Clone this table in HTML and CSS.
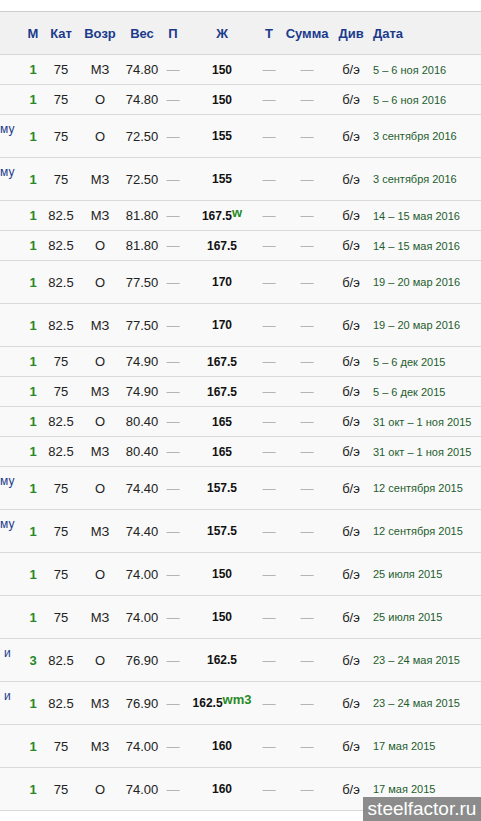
FILE: index.html
```html
<!DOCTYPE html>
<html lang="ru">
<head>
<meta charset="utf-8">
<title>Результаты</title>
<link rel="stylesheet" href="styles.css">
</head>
<body>
<div class="page">
<table class="res">
<colgroup>
<col class="w0"><col class="w1"><col class="w2"><col class="w3"><col class="w4"><col class="w5"><col class="w6"><col class="w7"><col class="w8"><col class="w9"><col class="w10">
</colgroup>
<thead>
<tr><th></th><th>М</th><th>Кат</th><th>Возр</th><th>Вес</th><th>П</th><th>Ж</th><th>Т</th><th>Сумма</th><th>Див</th><th class="dt">Дата</th></tr>
</thead>
<tbody>
<tr class="s"><td class="nm"></td><td class="pl">1</td><td>75</td><td>МЗ</td><td>74.80</td><td class="ds">—</td><td class="z">150</td><td class="ds">—</td><td class="ds">—</td><td>б/э</td><td class="dt">5 – 6 ноя 2016</td></tr>
<tr class="s"><td class="nm"></td><td class="pl">1</td><td>75</td><td>О</td><td>74.80</td><td class="ds">—</td><td class="z">150</td><td class="ds">—</td><td class="ds">—</td><td>б/э</td><td class="dt">5 – 6 ноя 2016</td></tr>
<tr class="t"><td class="nm">му<br>&nbsp;</td><td class="pl">1</td><td>75</td><td>О</td><td>72.50</td><td class="ds">—</td><td class="z">155</td><td class="ds">—</td><td class="ds">—</td><td>б/э</td><td class="dt">3 сентября 2016</td></tr>
<tr class="t"><td class="nm">му<br>&nbsp;</td><td class="pl">1</td><td>75</td><td>МЗ</td><td>72.50</td><td class="ds">—</td><td class="z">155</td><td class="ds">—</td><td class="ds">—</td><td>б/э</td><td class="dt">3 сентября 2016</td></tr>
<tr class="s"><td class="nm"></td><td class="pl">1</td><td>82.5</td><td>МЗ</td><td>81.80</td><td class="ds">—</td><td class="z">167.5<span class="rec">w</span></td><td class="ds">—</td><td class="ds">—</td><td>б/э</td><td class="dt">14 – 15 мая 2016</td></tr>
<tr class="s"><td class="nm"></td><td class="pl">1</td><td>82.5</td><td>О</td><td>81.80</td><td class="ds">—</td><td class="z">167.5</td><td class="ds">—</td><td class="ds">—</td><td>б/э</td><td class="dt">14 – 15 мая 2016</td></tr>
<tr class="t"><td class="nm"></td><td class="pl">1</td><td>82.5</td><td>О</td><td>77.50</td><td class="ds">—</td><td class="z">170</td><td class="ds">—</td><td class="ds">—</td><td>б/э</td><td class="dt">19 – 20 мар 2016</td></tr>
<tr class="t"><td class="nm"></td><td class="pl">1</td><td>82.5</td><td>МЗ</td><td>77.50</td><td class="ds">—</td><td class="z">170</td><td class="ds">—</td><td class="ds">—</td><td>б/э</td><td class="dt">19 – 20 мар 2016</td></tr>
<tr class="s"><td class="nm"></td><td class="pl">1</td><td>75</td><td>О</td><td>74.90</td><td class="ds">—</td><td class="z">167.5</td><td class="ds">—</td><td class="ds">—</td><td>б/э</td><td class="dt">5 – 6 дек 2015</td></tr>
<tr class="s"><td class="nm"></td><td class="pl">1</td><td>75</td><td>МЗ</td><td>74.90</td><td class="ds">—</td><td class="z">167.5</td><td class="ds">—</td><td class="ds">—</td><td>б/э</td><td class="dt">5 – 6 дек 2015</td></tr>
<tr class="s"><td class="nm"></td><td class="pl">1</td><td>82.5</td><td>О</td><td>80.40</td><td class="ds">—</td><td class="z">165</td><td class="ds">—</td><td class="ds">—</td><td>б/э</td><td class="dt">31 окт – 1 ноя 2015</td></tr>
<tr class="s"><td class="nm"></td><td class="pl">1</td><td>82.5</td><td>МЗ</td><td>80.40</td><td class="ds">—</td><td class="z">165</td><td class="ds">—</td><td class="ds">—</td><td>б/э</td><td class="dt">31 окт – 1 ноя 2015</td></tr>
<tr class="t"><td class="nm">му<br>&nbsp;</td><td class="pl">1</td><td>75</td><td>О</td><td>74.40</td><td class="ds">—</td><td class="z">157.5</td><td class="ds">—</td><td class="ds">—</td><td>б/э</td><td class="dt">12 сентября 2015</td></tr>
<tr class="t"><td class="nm">му<br>&nbsp;</td><td class="pl">1</td><td>75</td><td>МЗ</td><td>74.40</td><td class="ds">—</td><td class="z">157.5</td><td class="ds">—</td><td class="ds">—</td><td>б/э</td><td class="dt">12 сентября 2015</td></tr>
<tr class="t"><td class="nm"></td><td class="pl">1</td><td>75</td><td>О</td><td>74.00</td><td class="ds">—</td><td class="z">150</td><td class="ds">—</td><td class="ds">—</td><td>б/э</td><td class="dt">25 июля 2015</td></tr>
<tr class="t"><td class="nm"></td><td class="pl">1</td><td>75</td><td>МЗ</td><td>74.00</td><td class="ds">—</td><td class="z">150</td><td class="ds">—</td><td class="ds">—</td><td>б/э</td><td class="dt">25 июля 2015</td></tr>
<tr class="t"><td class="nm nm-i">и<br>&nbsp;</td><td class="pl">3</td><td>82.5</td><td>О</td><td>76.90</td><td class="ds">—</td><td class="z">162.5</td><td class="ds">—</td><td class="ds">—</td><td>б/э</td><td class="dt">23 – 24 мая 2015</td></tr>
<tr class="t"><td class="nm nm-i">и<br>&nbsp;</td><td class="pl">1</td><td>82.5</td><td>МЗ</td><td>76.90</td><td class="ds">—</td><td class="z">162.5<span class="rec">wm3</span></td><td class="ds">—</td><td class="ds">—</td><td>б/э</td><td class="dt">23 – 24 мая 2015</td></tr>
<tr class="t"><td class="nm"></td><td class="pl">1</td><td>75</td><td>МЗ</td><td>74.00</td><td class="ds">—</td><td class="z">160</td><td class="ds">—</td><td class="ds">—</td><td>б/э</td><td class="dt">17 мая 2015</td></tr>
<tr class="t"><td class="nm"></td><td class="pl">1</td><td>75</td><td>О</td><td>74.00</td><td class="ds">—</td><td class="z">160</td><td class="ds">—</td><td class="ds">—</td><td>б/э</td><td class="dt">17 мая 2015</td></tr>
</tbody>
</table>
<div class="wm">steelfactor.ru</div>
</div>
</body>
</html>
```

FILE: styles.css
```css
html, body {
  margin: 0;
  padding: 0;
  background: #ffffff;
}
body {
  width: 481px;
  height: 821px;
  overflow: hidden;
  font-family: "Liberation Sans", Arial, sans-serif;
}
.page {
  position: relative;
  width: 481px;
  height: 821px;
  padding-top: 11px;
  box-sizing: border-box;
}
.res {
  width: 481px;
  border-collapse: collapse;
  table-layout: fixed;
  font-size: 13px;
  color: #222222;
  background: #f9f9f9;
}
.w0 { width: 22px; }
.w1 { width: 22px; }
.w2 { width: 34px; }
.w3 { width: 44px; }
.w4 { width: 40px; }
.w5 { width: 22px; }
.w6 { width: 76px; }
.w7 { width: 18px; }
.w8 { width: 58px; }
.w9 { width: 30px; }
.w10 { width: 115px; }

.res th {
  height: 42px;
  padding: 0;
  background: #f1f1f1;
  color: #1b3a8c;
  font-weight: bold;
  font-size: 13px;
  text-align: center;
  white-space: nowrap;
  border-top: 1px solid #cfcfcf;
  border-bottom: 1px solid #d6d6d6;
}
.res td {
  padding: 0;
  text-align: center;
  vertical-align: middle;
  white-space: nowrap;
  border-bottom: 1px solid #d9d9d9;
}
.res tr.s td { height: 29px; }
.res tr.t td { height: 42px; }

.res th.dt,
.res td.dt {
  text-align: left;
  padding-left: 7px;
}
.res td.dt {
  font-size: 11px;
  color: #1d5d2d;
}
.res td.nm {
  text-align: left;
  font-size: 12px;
  line-height: 14px;
  color: #1b3a8c;
  overflow: hidden;
}
.res td.nm-i {
  padding-left: 4px;
}
.res td.pl {
  font-weight: bold;
  color: #268a26;
}
.res td.ds {
  color: #b4b4b4;
}
.res td.z {
  font-weight: bold;
  font-size: 12px;
  color: #111111;
}
.rec {
  font-size: 13px;
  color: #268a26;
  vertical-align: 3px;
  line-height: 0;
}
.wm {
  position: absolute;
  right: 0;
  bottom: 0;
  width: 118px;
  height: 24px;
  background: rgba(128, 128, 128, 0.9);
  color: #ffffff;
  font-size: 19px;
  line-height: 24px;
  text-align: center;
}
```
